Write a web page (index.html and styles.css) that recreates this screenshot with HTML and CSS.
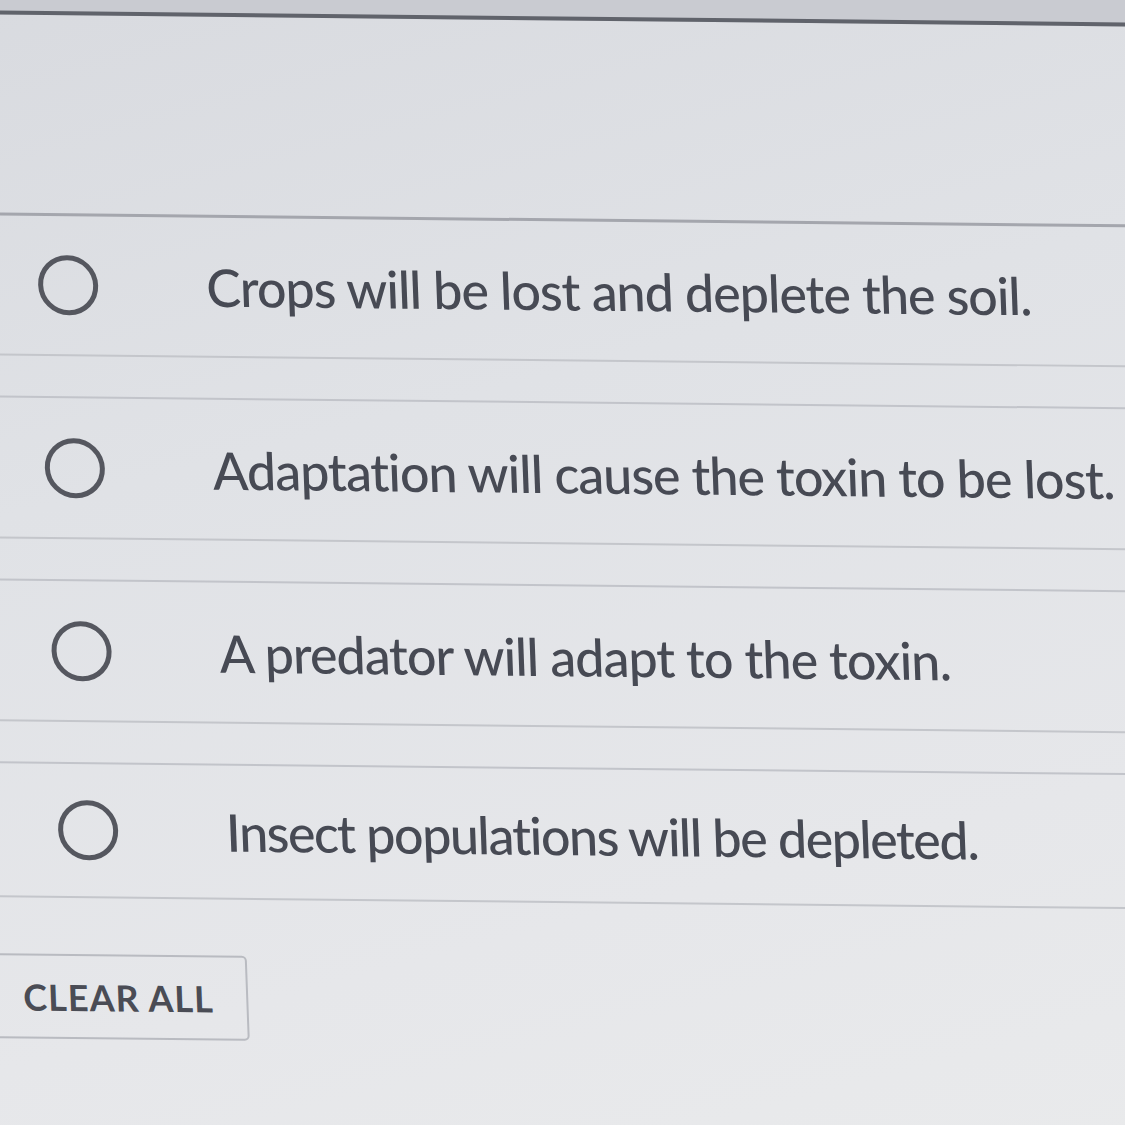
FILE: index.html
```html
<!DOCTYPE html>
<html lang="en">
<head>
<meta charset="utf-8">
<title>Question options</title>
<link rel="stylesheet" href="styles.css">
</head>
<body>
<div class="screen">
  <div class="status-strip"></div>
  <div class="question-space"></div>
  <ul class="options">
    <li class="option"><span class="radio"></span><span class="label">Crops will be lost and deplete the soil.</span></li>
    <li class="option"><span class="radio"></span><span class="label">Adaptation will cause the toxin to be lost.</span></li>
    <li class="option"><span class="radio"></span><span class="label">A predator will adapt to the toxin.</span></li>
    <li class="option"><span class="radio"></span><span class="label">Insect populations will be depleted.</span></li>
  </ul>
  <button class="clear-all" type="button">CLEAR ALL</button>
</div>
</body>
</html>
```

FILE: styles.css
```css
html, body {
  margin: 0;
  height: 100%;
  overflow: hidden;
  background: #dcdee3;
}

.screen {
  margin: -20px 0 0 -60px;
  padding-left: 60px;
  width: 1300px;
  height: 1220px;
  box-sizing: border-box;
  display: flex;
  flex-direction: column;
  transform: skew(2.1deg, 0.6deg);
  transform-origin: 0 0;
  background: linear-gradient(165deg, #d8dadf 0%, #e0e2e6 35%, #e6e7ea 70%, #eaebec 100%);
  font-family: Lato, "Open Sans", sans-serif;
  color: #474a54;
}

.status-strip {
  flex: none;
  height: 30px;
  margin-left: -60px;
  background: #c9cbd1;
  border-bottom: 4px solid #60636b;
}

.question-space {
  flex: none;
  height: 198px;
}

.options {
  list-style: none;
  margin: 0 0 0 -60px;
  padding: 0;
  display: flex;
  flex-direction: column;
  gap: 40px;
}

.option {
  height: 143px;
  box-sizing: border-box;
  display: flex;
  align-items: center;
  padding-left: 87px;
  border-top: 2px solid #c2c4ca;
  border-bottom: 2px solid #c4c6cb;
}

.option:first-child {
  border-top: 3px solid #a4a6ad;
}

.option:last-child {
  height: 136px;
}

.radio {
  flex: none;
  width: 60px;
  height: 60px;
  box-sizing: border-box;
  border: 5px solid #55575f;
  border-radius: 50%;
  margin-right: 108px;
}

.label {
  font-size: 52px;
  font-weight: 500;
  letter-spacing: -1px;
  line-height: 1;
  white-space: nowrap;
}

.option:last-child .label {
  letter-spacing: -1.5px;
}

.clear-all {
  align-self: flex-start;
  margin: 56px 0 0 -66px;
  width: 277px;
  height: 85px;
  padding: 0 0 0 50px;
  text-align: left;
  background: transparent;
  border: 2px solid #b9bbc1;
  border-radius: 5px;
  font-family: Lato, "Open Sans", sans-serif;
  font-size: 36px;
  font-weight: 700;
  letter-spacing: 1px;
  color: #4a4c55;
}
```
